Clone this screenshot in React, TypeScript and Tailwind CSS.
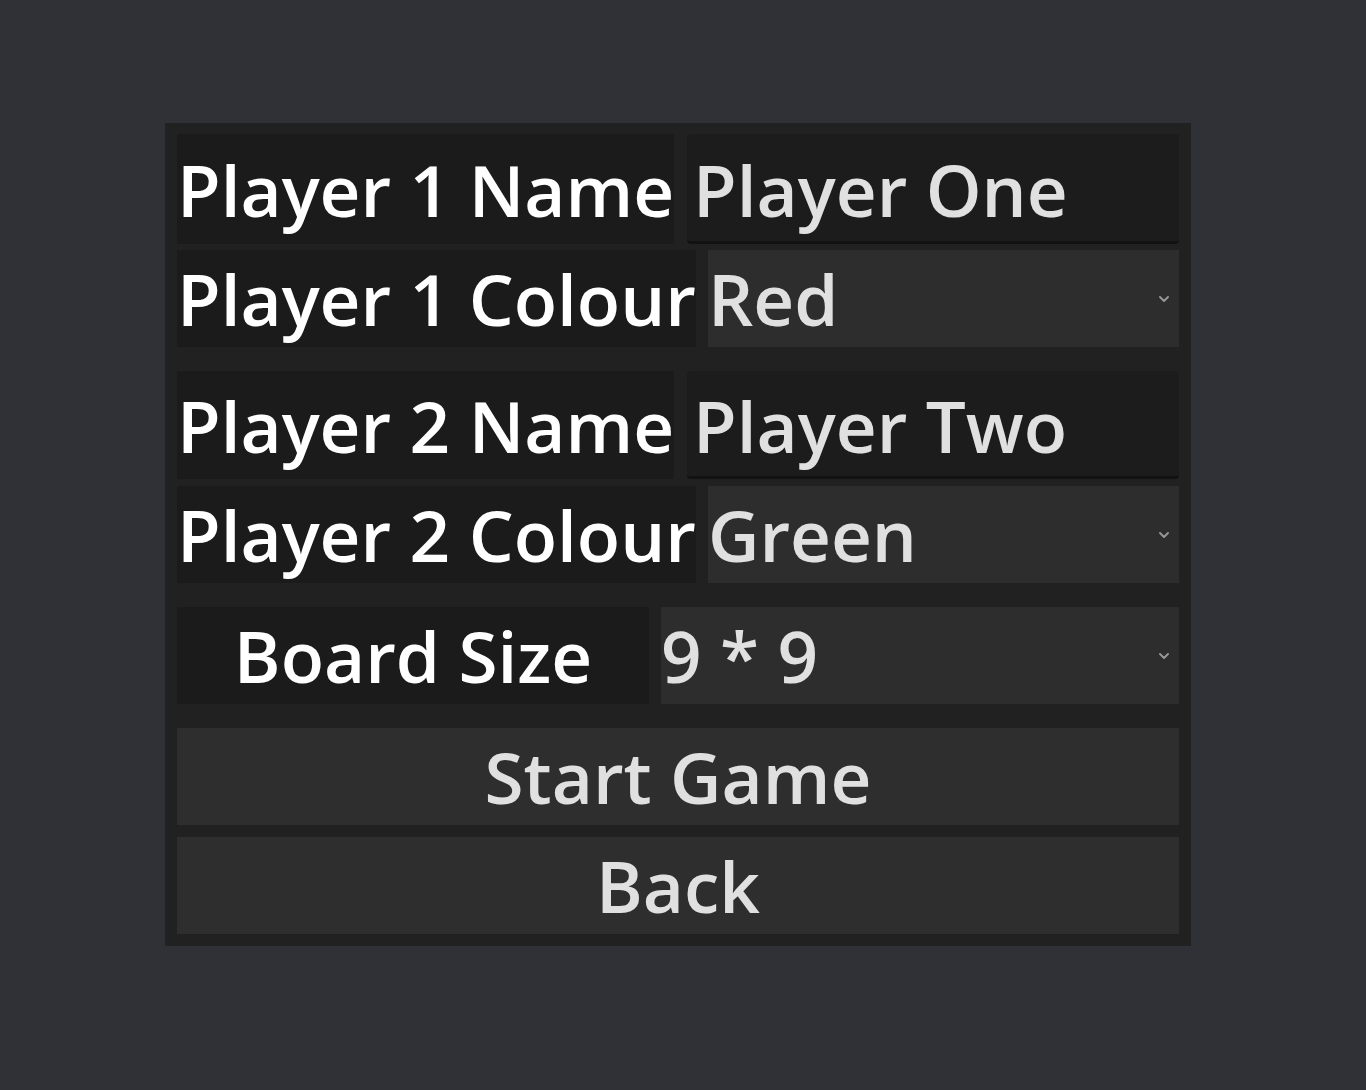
import { useState } from 'react';

const FONT = { fontFamily: '"Open Sans", "Noto Sans", sans-serif' };

function Chevron() {
  return (
    <svg width="12" height="8" viewBox="0 0 12 8" className="shrink-0">
      <path d="M2 2 L6 6 L10 2" fill="none" stroke="#969696" strokeWidth="2" strokeLinecap="round" strokeLinejoin="round" />
    </svg>
  );
}

function Label({ text, className = '' }: { text: string; className?: string }) {
  return (
    <div className={`flex items-center bg-[#1b1b1b] text-white text-[71px] leading-[97px] font-semibold whitespace-nowrap ${className}`}>
      {text}
    </div>
  );
}

function NameEdit({ initial }: { initial: string }) {
  const [value, setValue] = useState(initial);
  return (
    <input
      value={value}
      onChange={(e) => setValue(e.target.value)}
      style={FONT}
      className="flex-1 min-w-0 h-full rounded-[4px] bg-[#1c1c1c] border-b-[3px] border-[#121212] pl-[6px] pt-[3px] text-[71px] leading-[97px] font-semibold text-[#e0e0e0] outline-none"
    />
  );
}

function Select({ value, className = '' }: { value: string; className?: string }) {
  return (
    <div className={`flex-1 flex items-center justify-between bg-[#2d2d2d] pl-0 pr-[9px] text-[71px] leading-[97px] font-semibold text-[#e0e0e0] ${className}`}>
      <span className="whitespace-nowrap">{value}</span>
      <Chevron />
    </div>
  );
}

function Button({ text }: { text: string }) {
  return (
    <button
      style={FONT}
      className="h-[97px] w-full bg-[#2e2e2e] text-[71px] leading-[97px] font-semibold text-[#e0e0e0] text-center"
    >
      {text}
    </button>
  );
}

export default function App() {
  return (
    <div style={FONT} className="min-h-[1090px] w-full bg-[#303136] pl-[165px] pt-[123px]">
      <div className="w-[1026px] bg-[#212121] px-3 pt-[11px] pb-3 flex flex-col">
        <div className="flex h-[110px] gap-[13px]">
          <Label text="Player 1 Name" />
          <NameEdit initial="Player One" />
        </div>
        <div className="flex h-[97px] gap-[12px] mt-[6px]">
          <Label text="Player 1 Colour" />
          <Select value="Red" />
        </div>

        <div className="flex h-[108px] gap-[13px] mt-[24px]">
          <Label text="Player 2 Name" />
          <NameEdit initial="Player Two" />
        </div>
        <div className="flex h-[97px] gap-[12px] mt-[7px]">
          <Label text="Player 2 Colour" />
          <Select value="Green" />
        </div>

        <div className="flex h-[97px] gap-[12px] mt-[24px]">
          <Label text="Board Size" className="w-[472px] justify-center" />
          <Select value="9 * 9" />
        </div>

        <div className="mt-[24px]">
          <Button text="Start Game" />
        </div>
        <div className="mt-[12px]">
          <Button text="Back" />
        </div>
      </div>
    </div>
  );
}
